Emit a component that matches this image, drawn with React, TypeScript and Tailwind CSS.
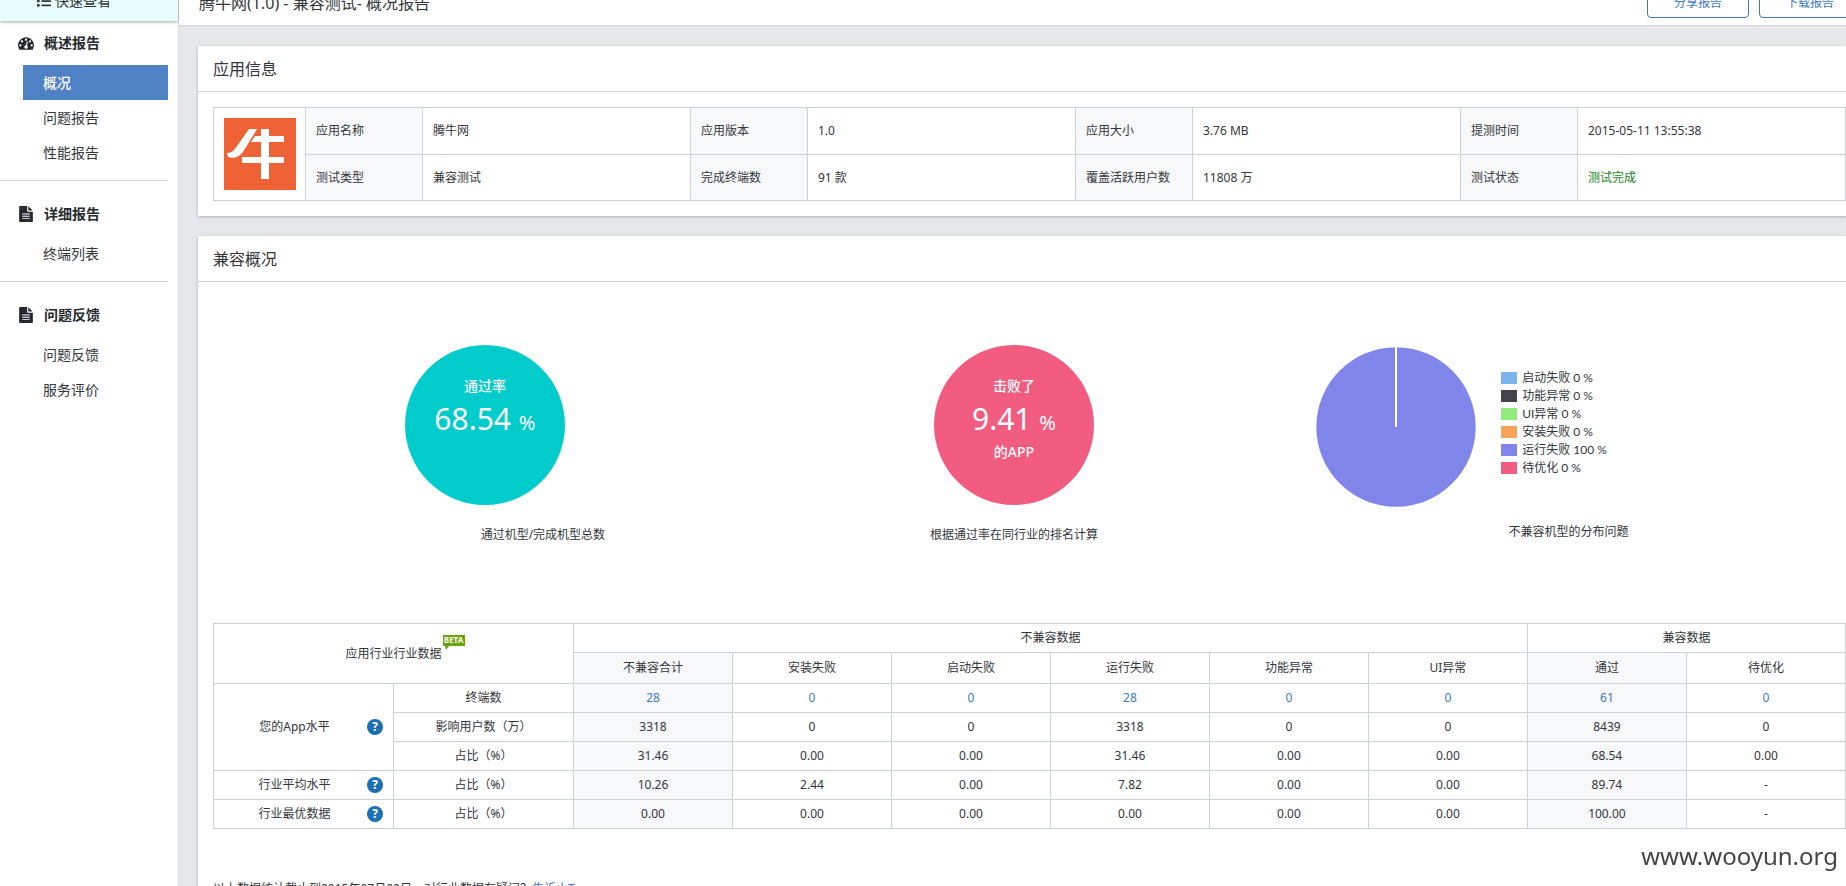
import type { ReactNode } from "react";
import { FaList } from "react-icons/fa";
import clsx from "clsx";

type IconProps = { className?: string };

const GaugeIcon = ({ className }: IconProps) => (
  <svg viewBox="0 0 1792 1792" fill="currentColor" className={className} aria-hidden="true">
    <path d="M384 1152q0-53-37.5-90.5t-90.5-37.5-90.5 37.5-37.5 90.5 37.5 90.5 90.5 37.5 90.5-37.5 37.5-90.5zm192-448q0-53-37.5-90.5t-90.5-37.5-90.5 37.5-37.5 90.5 37.5 90.5 90.5 37.5 90.5-37.5 37.5-90.5zm428 481l101-382q6-26-7.5-48.5t-38.5-29.5-48 6.5-30 39.5l-101 382q-60 5-107 43.5t-63 98.5q-20 77 20 146t117 89 146-20 89-117q16-60-6-117t-72-91zm660-33q0-53-37.5-90.5t-90.5-37.5-90.5 37.5-37.5 90.5 37.5 90.5 90.5 37.5 90.5-37.5 37.5-90.5zm-640-640q0-53-37.5-90.5t-90.5-37.5-90.5 37.5-37.5 90.5 37.5 90.5 90.5 37.5 90.5-37.5 37.5-90.5zm448 192q0-53-37.5-90.5t-90.5-37.5-90.5 37.5-37.5 90.5 37.5 90.5 90.5 37.5 90.5-37.5 37.5-90.5zm320 448q0 261-141 483-19 29-54 29h-1402q-35 0-54-29-141-221-141-483 0-182 71-348t191-286 286-191 348-71 348 71 286 191 191 286 71 348z" />
  </svg>
);

const FileIcon = ({ className }: IconProps) => (
  <svg viewBox="0 0 1792 1792" fill="currentColor" className={className} aria-hidden="true">
    <path
      fillRule="evenodd"
      d="M1596 476q14 14 28 36h-472v-472q22 14 36 28zM1120 640h544v1056q0 40-28 68t-68 28h-1344q-40 0-68-28t-28-68v-1600q0-40 28-68t68-28h800v544q0 40 28 68t68 28zM480 830h832v110h-832zM480 1080h832v110h-832zM480 1330h832v110h-832z"
    />
  </svg>
);

const AppLogo = () => (
  <svg viewBox="0 0 72 72" className="block size-[72px]" role="img" aria-label="腾牛网">
    <rect width="72" height="72" fill="#ef6236" />
    <g fill="#fff">
      <path d="M25 11h8L19 34c-4 5-9 7-15 5l-1-4c5 0 7-3 10-7z" />
      <path d="M31 18h29v6H27z" />
      <path d="M18 39h42v6H18z" />
      <path d="M37 11h8v50h-8z" />
    </g>
  </svg>
);

const menu = [
  { title: "概述报告", icon: GaugeIcon, items: ["概况", "问题报告", "性能报告"] },
  { title: "详细报告", icon: FileIcon, items: ["终端列表"] },
  { title: "问题反馈", icon: FileIcon, items: ["问题反馈", "服务评价"] },
];

const appInfo = [
  [
    ["应用名称", "腾牛网"],
    ["应用版本", "1.0"],
    ["应用大小", "3.76 MB"],
    ["提测时间", "2015-05-11 13:55:38"],
  ],
  [
    ["测试类型", "兼容测试"],
    ["完成终端数", "91 款"],
    ["覆盖活跃用户数", "11808 万"],
    ["测试状态", "测试完成"],
  ],
];

const legend = [
  { label: "启动失败", value: 0, color: "bg-[#7cb5ec]" },
  { label: "功能异常", value: 0, color: "bg-[#434348]" },
  { label: "UI异常", value: 0, color: "bg-[#90ed7d]" },
  { label: "安装失败", value: 0, color: "bg-[#f7a35c]" },
  { label: "运行失败", value: 100, color: "bg-[#8085e9]" },
  { label: "待优化", value: 0, color: "bg-[#f15c80]" },
];

const columns = ["不兼容合计", "安装失败", "启动失败", "运行失败", "功能异常", "UI异常", "通过", "待优化"];

const rows = [
  { group: "您的App水平", span: 3, name: "终端数", link: true, values: ["28", "0", "0", "28", "0", "0", "61", "0"] },
  { name: "影响用户数（万）", values: ["3318", "0", "0", "3318", "0", "0", "8439", "0"] },
  { name: "占比（%）", values: ["31.46", "0.00", "0.00", "31.46", "0.00", "0.00", "68.54", "0.00"] },
  { group: "行业平均水平", span: 1, name: "占比（%）", values: ["10.26", "2.44", "0.00", "7.82", "0.00", "0.00", "89.74", "-"] },
  { group: "行业最优数据", span: 1, name: "占比（%）", values: ["0.00", "0.00", "0.00", "0.00", "0.00", "0.00", "100.00", "-"] },
];

// total columns get the grey background
const isTotal = (i: number) => i === 0 || i === 6;

const Sidebar = () => (
  <aside className="w-[179px] shrink-0 border-r border-[#d9dbde] bg-white text-sm text-[#33363a]">
    <a href="#quick" className="flex h-[41px] items-center gap-1 bg-[#e8fdfe] pl-[37px] shadow-[0_1px_3px_rgba(0,0,0,0.35)]">
      <FaList className="size-[14px]" />
      快速查看
    </a>
    <nav>
      {menu.map((group, g) => (
        <section key={group.title} className={clsx(g > 0 && "mr-2.5 border-t border-[#d2d4d6] pt-[11px]")}>
          <h2 className="flex h-11 items-center gap-2.5 pl-[18px] font-bold text-[#26292d]">
            <group.icon className="size-4" />
            {group.title}
          </h2>
          <ul className={clsx("ml-[23px] pb-2.5", g === 0 && "mr-2.5")}>
            {group.items.map((item, i) => (
              <li key={item}>
                <a
                  href="#"
                  className={clsx(
                    "flex h-[35px] items-center pl-5",
                    g === 0 && i === 0 && "bg-[#4f82c5] font-medium text-white"
                  )}
                >
                  {item}
                </a>
              </li>
            ))}
          </ul>
        </section>
      ))}
    </nav>
  </aside>
);

const Card = ({ title, children }: { title: string; children: ReactNode }) => (
  <section className="bg-white shadow-[0_1px_3px_rgba(0,0,0,0.25)]">
    <h2 className="flex h-[46px] items-center border-b border-[#d2d4d6] pl-[15px] text-base">{title}</h2>
    <div className="pt-[15px] pb-[15px] pl-[15px]">{children}</div>
  </section>
);

const InfoTable = () => (
  <table className="w-full table-fixed border-collapse text-xs">
    <colgroup>
      <col className="w-[92px]" />
      {appInfo[0].map(([label]) => [
        <col key={label} className="w-[117px]" />,
        <col key={label + "-value"} />,
      ])}
    </colgroup>
    <tbody>
      {appInfo.map((row, r) => (
        <tr key={r} className={r === 0 ? "h-[47px]" : "h-[46px]"}>
          {r === 0 && (
            <td rowSpan={2} className="border border-[#cfd2d5] pl-2.5">
              <AppLogo />
            </td>
          )}
          {row.map(([label, value]) => [
            <th key={label} scope="row" className="border border-[#cfd2d5] bg-[#f6f8fa] pl-2.5 text-left font-normal">
              {label}
            </th>,
            <td
              key={label + "-value"}
              className={clsx("border border-[#cfd2d5] pl-2.5", label === "测试状态" && "text-[#1a7f22]")}
            >
              {value}
            </td>,
          ])}
        </tr>
      ))}
    </tbody>
  </table>
);

type CircleProps = { color: string; top: string; value: string; bottom?: string };

const StatCircle = ({ color, top, value, bottom }: CircleProps) => (
  <div className={clsx("flex size-40 flex-col items-center rounded-full pt-[31px] text-sm leading-5 font-medium text-white", color)}>
    <span>{top}</span>
    <span className="text-3xl leading-[46px] font-normal">
      {value} <span className="text-xl">%</span>
    </span>
    {bottom && <span>{bottom}</span>}
  </div>
);

const PieChart = () => (
  <svg viewBox="0 0 160 160" className="size-40 shrink-0" role="img" aria-label="运行失败 100 %">
    <circle cx="80" cy="80" r="79.7" fill="#8085e9" />
    <path d="M80 0v80" stroke="#fff" strokeWidth="2" />
  </svg>
);

const Overview = () => (
  <div className="grid h-[278px] grid-cols-[33.3%_31.5%_35.2%] pt-12 text-xs">
    <div className="flex flex-col items-center">
      <StatCircle color="bg-[#00cccc]" top="通过率" value="68.54" />
      <p className="mt-5 pl-[116px] leading-5">通过机型/完成机型总数</p>
    </div>
    <div className="flex flex-col items-center">
      <StatCircle color="bg-[#f15c80]" top="击败了" value="9.41" bottom="的APP" />
      <p className="mt-5 leading-5">根据通过率在同行业的排名计算</p>
    </div>
    <div className="flex flex-col pt-0.5">
      <div className="flex gap-[25px] pl-[45px]">
        <PieChart />
        <ul className="pt-[22px] leading-[18px]">
          {legend.map((item) => (
            <li key={item.label} className="flex items-center gap-[5px]">
              <span className={clsx("h-3 w-4", item.color)} />
              <span className="font-['Lato','Noto_Sans_CJK_SC',sans-serif]">
                {item.label} {item.value} %
              </span>
            </li>
          ))}
        </ul>
      </div>
      <p className="mt-[15px] pl-5 text-center leading-5">不兼容机型的分布问题</p>
    </div>
  </div>
);

const HelpButton = ({ label }: { label: string }) => (
  <button
    type="button"
    aria-label={label + "说明"}
    className="flex size-4 items-center justify-center rounded-full bg-[#1b6fb5] font-['Open_Sans',sans-serif] text-xs leading-4 font-bold text-white"
  >
    ?
  </button>
);

const DataTable = () => (
  <table className="w-full table-fixed border-collapse text-center text-xs">
    <colgroup>
      <col className="w-[180px]" />
      <col className="w-[180px]" />
      {columns.map((name) => (
        <col key={name} />
      ))}
    </colgroup>
    <thead>
      <tr className="h-[29px]">
        <th colSpan={2} rowSpan={2} className="border border-[#cfd2d5] font-normal">
          <span className="relative">
            应用行业行业数据
            <span className="absolute -top-2.5 left-full ml-px flex h-[11px] w-[22px] items-center justify-center bg-[#6aa30a] text-[8px] leading-none font-bold text-white">
              BETA
              <svg viewBox="0 0 4 4" className="absolute top-full left-0.5 size-1" aria-hidden="true">
                <path d="M0 0h4L1 4z" fill="#6aa30a" />
              </svg>
            </span>
          </span>
        </th>
        <th colSpan={6} className="border border-[#cfd2d5] font-normal">不兼容数据</th>
        <th colSpan={2} className="border border-[#cfd2d5] font-normal">兼容数据</th>
      </tr>
      <tr className="h-[31px]">
        {columns.map((name, i) => (
          <th key={name} className={clsx("border border-[#cfd2d5] font-normal", isTotal(i) && "bg-[#f6f8fa]")}>
            {name}
          </th>
        ))}
      </tr>
    </thead>
    <tbody>
      {rows.map((row, r) => (
        <tr key={r} className="h-[29px]">
          {row.group && (
            <th rowSpan={row.span} scope="rowgroup" className="border border-[#cfd2d5] font-normal">
              <div className="flex items-center pr-2.5 pl-2">
                <span className="flex-1">{row.group}</span>
                <HelpButton label={row.group} />
              </div>
            </th>
          )}
          <th scope="row" className="border border-[#cfd2d5] font-normal">{row.name}</th>
          {row.values.map((value, i) => (
            <td key={i} className={clsx("border border-[#cfd2d5]", isTotal(i) && "bg-[#f6f8fa]")}>
              {row.link ? <a href="#" className="text-[#4079c4]">{value}</a> : value}
            </td>
          ))}
        </tr>
      ))}
    </tbody>
  </table>
);

const App = () => {
  return (
    <div className="h-screen overflow-hidden bg-[#e5e7ea] font-['Noto_Sans','Noto_Sans_CJK_SC',sans-serif] text-[#33363a]">
      {/* page is scrolled down a little, the top bar is cut */}
      <div className="-mt-5 flex min-h-[110vh]">
        <Sidebar />
        <main className="min-w-0 flex-1">
          <header className="flex h-[46px] items-center border-b border-[#d2d4d6] bg-white pl-5">
            <h1 className="flex-1 text-base">腾牛网(1.0) - 兼容测试- 概况报告</h1>
            <div className="-mr-[15px] flex shrink-0 gap-2.5 text-xs text-[#4079c4]">
              <button type="button" className="h-[31px] w-[102px] rounded border border-[#4079b4]">分享报告</button>
              <button type="button" className="h-[31px] w-[102px] rounded border border-[#4079b4]">下载报告</button>
            </div>
          </header>
          <div className="flex flex-col gap-5 pt-5 pl-[19px]">
            <Card title="应用信息">
              <InfoTable />
            </Card>
            <Card title="兼容概况">
              <Overview />
              <div className="mt-12">
                <DataTable />
              </div>
              <p className="mt-[50px] text-xs leading-5">
                以上数据统计截止到2015年07月22日，对行业数据有疑问？
                <a href="#" className="text-[#4079c4]">告诉小T</a>
              </p>
            </Card>
          </div>
        </main>
      </div>
      <div className="fixed right-2 bottom-3 text-2xl leading-9 text-[#444]">www.wooyun.org</div>
    </div>
  );
};

export default App;
